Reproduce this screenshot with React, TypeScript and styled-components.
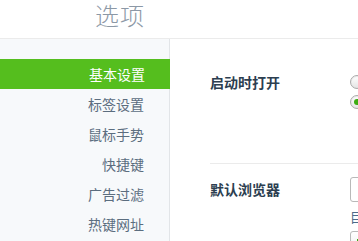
import React from "react";
import styled, { createGlobalStyle } from "styled-components";

const GlobalStyle = createGlobalStyle`
  html, body {
    margin: 0;
    padding: 0;
    background: #ffffff;
    font-family: "Noto Sans CJK SC", "Noto Sans", sans-serif;
  }
`;

const Page = styled.div`
  width: 358px;
  height: 241px;
  overflow: hidden;
  display: flex;
  flex-direction: column;
  background: #ffffff;
`;

const Header = styled.div`
  height: 38px;
  flex-shrink: 0;
  border-bottom: 1px solid #ebebeb;
  display: flex;
  align-items: flex-start;
`;

const Title = styled.h1`
  width: 170px;
  box-sizing: border-box;
  margin: 0;
  padding: 0 25px 0 0;
  text-align: right;
  font-size: 24px;
  font-weight: 300;
  line-height: 30px;
  color: #8c98a6;
  letter-spacing: 1px;
`;

const Body = styled.div`
  flex: 1;
  display: flex;
  min-height: 0;
`;

const Sidebar = styled.nav`
  width: 169px;
  flex-shrink: 0;
  background: #f7f9fb;
  border-right: 1px solid #e2e5e8;
  padding-top: 20px;
  display: flex;
  flex-direction: column;
`;

const NavItem = styled.div<{ $active?: boolean }>`
  height: 30px;
  line-height: 30px;
  padding-right: 25px;
  text-align: right;
  font-size: 14px;
  color: ${(p) => (p.$active ? "#ffffff" : "#5b6d7f")};
  background: ${(p) => (p.$active ? "#55be1e" : "transparent")};
  margin-right: ${(p) => (p.$active ? "-1px" : "0")};
`;

const Main = styled.main`
  flex: 1;
  min-width: 0;
  padding-left: 40px;
  display: flex;
  flex-direction: column;
`;

const Section = styled.section<{ $top: number; $bottom: number; $divider?: boolean }>`
  display: flex;
  padding-top: ${(p) => p.$top}px;
  padding-bottom: ${(p) => p.$bottom}px;
  border-top: ${(p) => (p.$divider ? "1px solid #ebebeb" : "none")};
`;

const Label = styled.div<{ $lh: number }>`
  width: 140px;
  flex-shrink: 0;
  font-size: 14px;
  font-weight: 700;
  line-height: ${(p) => p.$lh}px;
  color: #2c3e50;
  white-space: nowrap;
`;

const Options = styled.div`
  display: flex;
  flex-direction: column;
  white-space: nowrap;
`;

const RadioRow = styled.div`
  height: 20px;
  display: flex;
  align-items: center;
`;

const Radio = styled.span<{ $checked?: boolean }>`
  width: 12px;
  height: 12px;
  flex-shrink: 0;
  border-radius: 50%;
  border: 1px solid #a9a9a9;
  background: linear-gradient(#ffffff, #e4e4e4);
  box-shadow: inset 0 1px 1px rgba(0, 0, 0, 0.08);
  display: flex;
  align-items: center;
  justify-content: center;
  &::after {
    content: "";
    width: 6px;
    height: 6px;
    border-radius: 50%;
    background: ${(p) => (p.$checked ? "#3cad12" : "transparent")};
  }
`;

const Select = styled.div`
  width: 120px;
  height: 23px;
  border: 1px solid #b9b9b9;
  border-radius: 3px;
  background: #ffffff;
`;

const Hint = styled.div`
  margin-top: 6px;
  font-size: 13px;
  line-height: 18px;
  color: #4c6b8a;
`;

const SmallButton = styled.div`
  margin-top: 5px;
  width: 60px;
  height: 20px;
  border: 1px solid #b9b9b9;
  border-radius: 3px;
  background: linear-gradient(#ffffff, #ececec);
  display: flex;
  align-items: center;
  padding-left: 3px;
`;

const navItems = ["基本设置", "标签设置", "鼠标手势", "快捷键", "广告过滤", "热键网址"];

const App = () => {
  return (
    <Page>
      <GlobalStyle />
      <Header>
        <Title>选项</Title>
      </Header>
      <Body>
        <Sidebar>
          {navItems.map((item, i) => (
            <NavItem key={item} $active={i === 0}>
              {item}
            </NavItem>
          ))}
        </Sidebar>
        <Main>
          <Section $top={33} $bottom={51}>
            <Label $lh={20}>启动时打开</Label>
            <Options>
              <RadioRow>
                <Radio />
              </RadioRow>
              <RadioRow>
                <Radio $checked />
              </RadioRow>
            </Options>
          </Section>
          <Section $top={13} $bottom={0} $divider>
            <Label $lh={25}>默认浏览器</Label>
            <Options>
              <Select />
              <Hint>目前默认浏览器</Hint>
              <SmallButton>
                <svg width="8" height="8" viewBox="0 0 8 8">
                  <path d="M4 1v6M1 4h6" stroke="#3cad12" strokeWidth="2" />
                </svg>
              </SmallButton>
            </Options>
          </Section>
        </Main>
      </Body>
    </Page>
  );
};

export default App;
